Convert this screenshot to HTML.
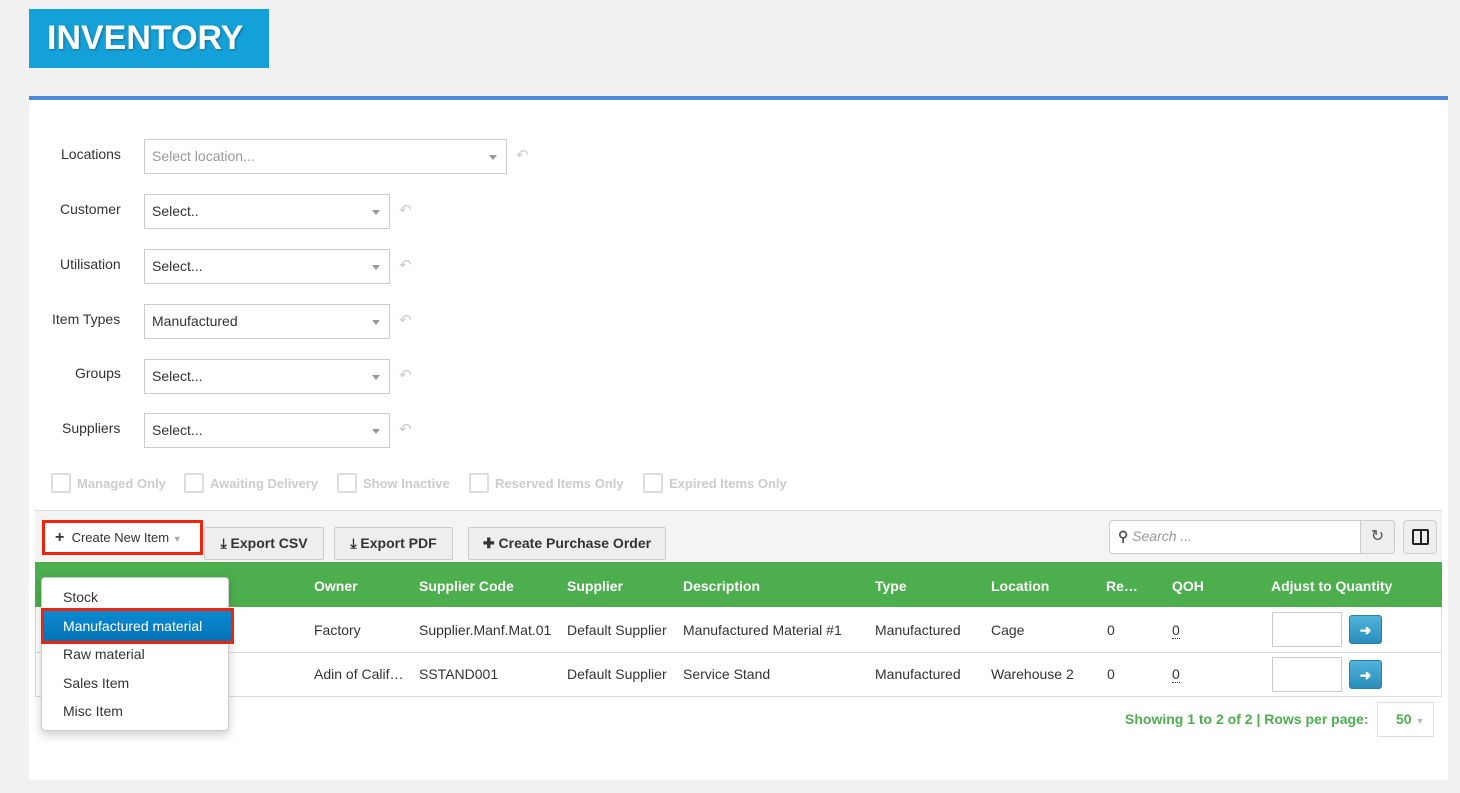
<!DOCTYPE html>
<html><head><style>
*{box-sizing:border-box;margin:0;padding:0}
body{width:1460px;height:793px;background:#f1f1f1;font-family:"Liberation Sans",Arial,sans-serif;font-size:14px;color:#333;position:relative;overflow:hidden}
.a{position:absolute}
.title{left:29px;top:9px;width:240px;height:59px;background:#14a0d8;color:#fff;font-weight:bold;font-size:34px;line-height:59px;padding-left:18px;text-shadow:1px 1px 2px rgba(0,0,0,.3)}
.panel{left:29px;top:96px;width:1419px;height:684px;background:#fff;border-top:4px solid #4a89dc}
.lbl{font-size:14px;color:#333}
.sel{height:35px;border:1px solid #ccc;background:#fff;padding-left:7px;line-height:33px;font-size:14px;color:#333}
.sel:after{content:"";position:absolute;right:9px;top:15px;border:4px solid transparent;border-top:5px solid #999}
.undo{color:#ccc;font-size:15px}
.cb{font-size:13px;font-weight:bold;color:#ccc;display:flex;align-items:center}
.cb i{display:inline-block;width:20px;height:20px;border:2px solid #ddd;border-radius:2px;margin-right:6px}
.btn{height:33px;border:1px solid #ccc;background:#eee;font-weight:bold;color:#333;font-size:14px;line-height:31px;text-align:center;border-radius:2px}
.th{color:#fff;font-weight:bold;font-size:14px;top:578px}
.td{font-size:14px;color:#333}
.inp{width:70px;height:35px;border:1px solid #ccc;background:#fff}
.go{width:33px;height:29px;background:linear-gradient(#4fb3da,#2a8dbd);border-radius:3px;color:#fff;text-align:center;line-height:29px;font-weight:bold;border:1px solid #2a7fa8}
</style></head><body>
<div class="a title">INVENTORY</div>
<div class="a panel"></div>

<div class="a lbl" style="left:61px;top:146px">Locations</div>
<div class="a sel" style="left:144px;top:139px;width:363px;color:#999">Select location...</div>
<div class="a undo" style="left:516px;top:146px">↶</div>

<div class="a lbl" style="left:60px;top:201px">Customer</div>
<div class="a sel" style="left:144px;top:194px;width:246px">Select..</div>
<div class="a undo" style="left:399px;top:201px">↶</div>
<div class="a lbl" style="left:60px;top:256px">Utilisation</div>
<div class="a sel" style="left:144px;top:249px;width:246px">Select...</div>
<div class="a undo" style="left:399px;top:256px">↶</div>
<div class="a lbl" style="left:52px;top:311px">Item Types</div>
<div class="a sel" style="left:144px;top:304px;width:246px">Manufactured</div>
<div class="a undo" style="left:399px;top:311px">↶</div>
<div class="a lbl" style="left:75px;top:365px">Groups</div>
<div class="a sel" style="left:144px;top:359px;width:246px">Select...</div>
<div class="a undo" style="left:399px;top:366px">↶</div>
<div class="a lbl" style="left:62px;top:420px">Suppliers</div>
<div class="a sel" style="left:144px;top:413px;width:246px">Select...</div>
<div class="a undo" style="left:399px;top:420px">↶</div>

<div class="a cb" style="left:51px;top:473px"><i></i>Managed Only</div>
<div class="a cb" style="left:184px;top:473px"><i></i>Awaiting Delivery</div>
<div class="a cb" style="left:337px;top:473px"><i></i>Show Inactive</div>
<div class="a cb" style="left:469px;top:473px"><i></i>Reserved Items Only</div>
<div class="a cb" style="left:643px;top:473px"><i></i>Expired Items Only</div>

<div class="a" style="left:35px;top:510px;width:1407px;height:52px;background:#f4f4f4;border-top:1px solid #ddd"></div>
<div class="a" style="left:42px;top:520px;width:161px;height:35px;border:3px solid #f0240a;background:#fff;font-size:13px;line-height:29px;padding-left:10px"><b style="font-size:16px">+</b>&nbsp; Create New Item <span style="color:#aaa;font-size:9px">▼</span></div>
<div class="a btn" style="left:204px;top:527px;width:120px">⤓ Export CSV</div>
<div class="a btn" style="left:334px;top:527px;width:119px">⤓ Export PDF</div>
<div class="a btn" style="left:468px;top:527px;width:198px">✚ Create Purchase Order</div>
<div class="a" style="left:1109px;top:520px;width:286px;height:34px;border:1px solid #ccc;border-radius:4px;background:#fff"></div>
<div class="a" style="left:1118px;top:528px;color:#999;font-style:italic;font-size:14px"><b style="font-style:normal;color:#555">⚲</b> Search ...</div>
<div class="a" style="left:1360px;top:520px;width:35px;height:34px;border:1px solid #ccc;background:#eee;border-radius:0 4px 4px 0;text-align:center;line-height:32px;color:#555;font-size:16px">↻</div>
<div class="a" style="left:1403px;top:520px;width:34px;height:34px;border:1px solid #ccc;background:#eee;border-radius:4px"><div class="a" style="left:8px;top:8px;width:17px;height:16px;border:2px solid #222;border-radius:2px"></div><div class="a" style="left:16px;top:9px;width:2px;height:14px;background:#222"></div></div>

<div class="a" style="left:35px;top:562px;width:1407px;height:45px;background:#4cae4c"></div>
<div class="a th" style="left:314px">Owner</div>
<div class="a th" style="left:419px">Supplier Code</div>
<div class="a th" style="left:567px">Supplier</div>
<div class="a th" style="left:683px">Description</div>
<div class="a th" style="left:875px">Type</div>
<div class="a th" style="left:991px">Location</div>
<div class="a th" style="left:1106px">Re…</div>
<div class="a th" style="left:1172px">QOH</div>
<div class="a th" style="left:1271px">Adjust to Quantity</div>

<div class="a" style="left:35px;top:607px;width:1407px;height:90px;border:1px solid #ddd;border-top:none"></div>
<div class="a" style="left:35px;top:652px;width:1407px;height:1px;background:#ddd"></div>
<div class="a td" style="left:314px;top:622px">Factory</div>
<div class="a td" style="left:419px;top:622px">Supplier.Manf.Mat.01</div>
<div class="a td" style="left:567px;top:622px">Default Supplier</div>
<div class="a td" style="left:683px;top:622px">Manufactured Material #1</div>
<div class="a td" style="left:875px;top:622px">Manufactured</div>
<div class="a td" style="left:991px;top:622px">Cage</div>
<div class="a td" style="left:1107px;top:622px">0</div>
<div class="a td" style="left:1172px;top:622px;border-bottom:1px dotted #333">0</div>
<div class="a inp" style="left:1272px;top:612px"></div>
<div class="a go" style="left:1349px;top:615px">➜</div>
<div class="a td" style="left:314px;top:666px">Adin of Calif…</div>
<div class="a td" style="left:419px;top:666px">SSTAND001</div>
<div class="a td" style="left:567px;top:666px">Default Supplier</div>
<div class="a td" style="left:683px;top:666px">Service Stand</div>
<div class="a td" style="left:875px;top:666px">Manufactured</div>
<div class="a td" style="left:991px;top:666px">Warehouse 2</div>
<div class="a td" style="left:1107px;top:666px">0</div>
<div class="a td" style="left:1172px;top:666px;border-bottom:1px dotted #333">0</div>
<div class="a inp" style="left:1272px;top:657px"></div>
<div class="a go" style="left:1349px;top:660px">➜</div>

<div class="a" style="left:1125px;top:711px;color:#4cae4c;font-weight:bold;font-size:14px">Showing 1 to 2 of 2 | Rows per page:</div>
<div class="a" style="left:1377px;top:702px;width:57px;height:35px;border:1px solid #ddd;background:#fff;color:#4cae4c;font-weight:bold;line-height:33px;padding-left:18px">50 <span style="color:#bbb;font-size:9px">▼</span></div>

<div class="a" style="left:41px;top:577px;width:188px;height:154px;background:#fff;border:1px solid #ccc;border-radius:4px;box-shadow:0 4px 10px rgba(0,0,0,.2)"></div>
<div class="a td" style="left:63px;top:589px">Stock</div>
<div class="a" style="left:41px;top:608px;width:193px;height:36px;border:3px solid #f0240a;background:linear-gradient(#0a8ad0,#0673b8);color:#fff;font-size:14px;line-height:30px;padding-left:19px">Manufactured material</div>
<div class="a td" style="left:63px;top:646px">Raw material</div>
<div class="a td" style="left:63px;top:675px">Sales Item</div>
<div class="a td" style="left:63px;top:703px">Misc Item</div>
</body></html>
